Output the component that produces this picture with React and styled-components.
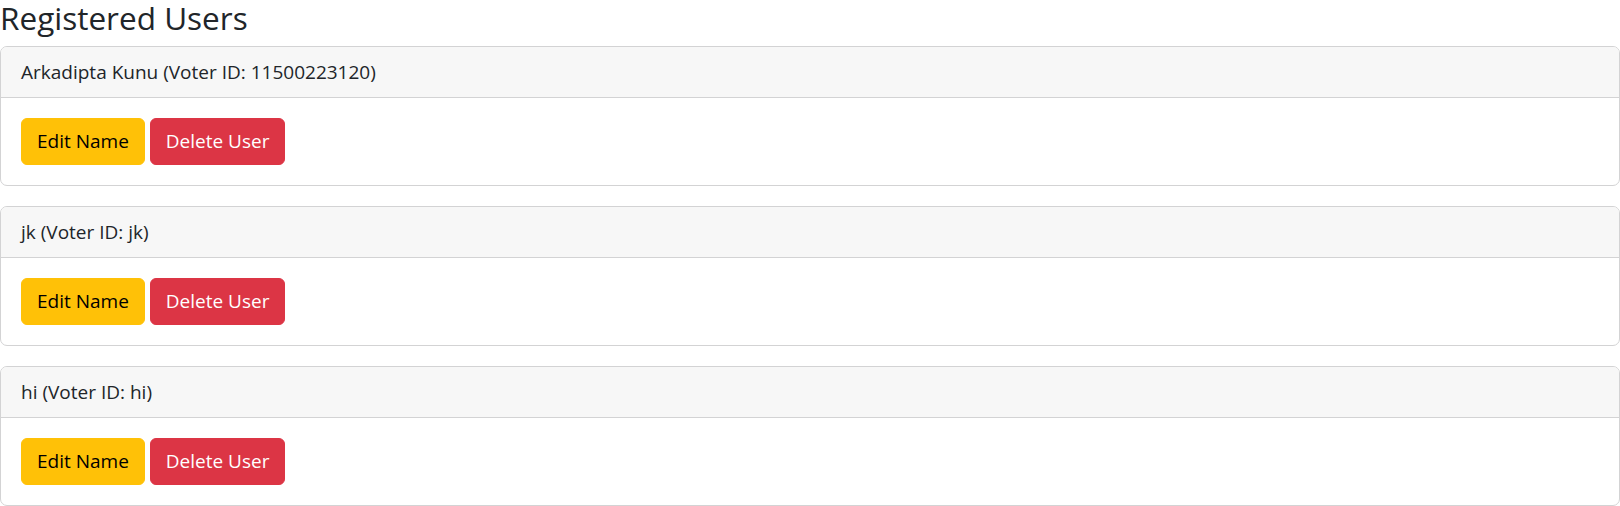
import styled, { createGlobalStyle } from "styled-components";

const GlobalStyle = createGlobalStyle`
  * {
    box-sizing: border-box;
  }

  body {
    margin: 0;
    font-family: "Open Sans", "Noto Sans", sans-serif;
    font-size: 20px;
    line-height: 1.5;
    color: #212529;
    background: #fff;
  }
`;

const Page = styled.div`
  width: 100%;
`;

const Title = styled.h4`
  margin: 0 0 10px;
  font-size: 31.5px;
  font-weight: 400;
  line-height: 36px;
`;

const UserList = styled.div`
  display: flex;
  flex-direction: column;
  gap: 20px;
`;

const Card = styled.div`
  border: 1px solid #d3d3d4;
  border-radius: 7px;
  overflow: hidden;
  background: #fff;
`;

const CardHeader = styled.div`
  padding: 10px 20px;
  background: #f7f7f7;
  border-bottom: 1px solid #d3d3d4;
  font-size: 19px;
  line-height: 30px;
`;

const CardBody = styled.div`
  display: flex;
  gap: 5px;
  padding: 20px;
`;

const Button = styled.button`
  font-family: inherit;
  font-size: 19px;
  line-height: 27px;
  padding: 9px 15px;
  border: 1px solid ${({ $bg }) => $bg};
  border-radius: 6px;
  background: ${({ $bg }) => $bg};
  color: ${({ $fg }) => $fg};
  cursor: pointer;
`;

const users = [
  { name: "Arkadipta Kunu", voterId: "11500223120" },
  { name: "jk", voterId: "jk" },
  { name: "hi", voterId: "hi" },
];

export default function App() {
  return (
    <Page>
      <GlobalStyle />
      <Title>Registered Users</Title>
      <UserList>
        {users.map((user) => (
          <Card key={user.voterId}>
            <CardHeader>
              {user.name} (Voter ID: {user.voterId})
            </CardHeader>
            <CardBody>
              <Button $bg="#ffc107" $fg="#000">
                Edit Name
              </Button>
              <Button $bg="#dc3545" $fg="#fff">
                Delete User
              </Button>
            </CardBody>
          </Card>
        ))}
      </UserList>
    </Page>
  );
}
